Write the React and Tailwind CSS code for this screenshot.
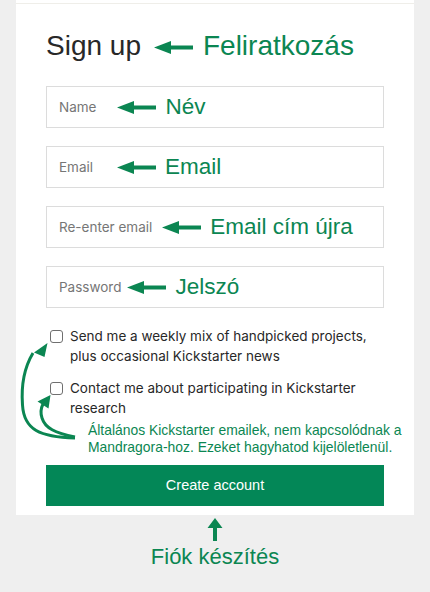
import React from 'react';

// Annotated Kickstarter sign-up form (Hungarian notes in green)
const GREEN = '#0b8652';

const LeftArrow = ({ className }) => (
  <svg width="39" height="13" viewBox="0 0 39 13" className={className}>
    <polygon points="0,6.5 17,0 17,4.5 39,4.5 39,8.5 17,8.5 17,13" fill={GREEN} />
  </svg>
);

const Field = ({ placeholder, note, gap }) => (
  <div className="h-[42px] border border-[#dcdcdc] flex items-center pl-[12px]">
    <span className="text-[13.5px] text-[#767676]" style={{ fontFamily: 'Inter, sans-serif' }}>
      {placeholder}
    </span>
    <LeftArrow className={gap} />
    <span className="ml-[9px] text-[22.5px] leading-none text-[#0b8652]" style={{ fontFamily: '"Liberation Sans", Arial, sans-serif' }}>
      {note}
    </span>
  </div>
);

const Check = ({ children }) => (
  <div className="flex items-start pl-[4px]">
    <span className="mt-[4px] w-[13px] h-[13px] shrink-0 rounded-[3px] border border-[#6f6f6f] bg-white" />
    <span className="ml-[7px] text-[13.5px] leading-[20px] text-[#282828] whitespace-nowrap" style={{ fontFamily: 'Inter, sans-serif' }}>
      {children}
    </span>
  </div>
);

export default function App() {
  return (
    <div className="min-h-[592px] bg-[#efefef] px-[16px]" style={{ fontFamily: '"Liberation Sans", Arial, sans-serif' }}>
      <div className="relative bg-white w-[398px]">
        <div className="pt-[3px]">
          <div className="h-px bg-[#efeee9]" />
        </div>
        <div className="px-[30px] pt-[28px] pb-[9px]">
          <div className="flex items-center h-[28px]">
            <span className="text-[28px] leading-[28px] text-[#282828]">Sign up</span>
            <LeftArrow className="ml-[13px] mt-[2px]" />
            <span className="ml-[10px] text-[28px] leading-[28px] text-[#0b8652]">Feliratkozás</span>
          </div>

          <div className="mt-[26px] flex flex-col gap-[18px]">
            <Field placeholder="Name" note="Név" gap="ml-[21px]" />
            <Field placeholder="Email" note="Email" gap="ml-[24px]" />
            <Field placeholder="Re-enter email" note="Email cím újra" gap="ml-[10px]" />
            <Field placeholder="Password" note="Jelszó" gap="ml-[6px]" />
          </div>

          <div className="mt-[18px] flex flex-col gap-[12px]">
            <Check>
              Send me a weekly mix of handpicked projects,
              <br />
              plus occasional Kickstarter news
            </Check>
            <Check>
              Contact me about participating in Kickstarter
              <br />
              research
            </Check>
          </div>

          <p className="mt-[4px] ml-[42px] -mr-[30px] text-[13.9px] leading-[17px] text-[#0b8652] whitespace-nowrap">
            Általános Kickstarter emailek, nem kapcsolódnak a
            <br />
            Mandragora-hoz. Ezeket hagyhatod kijelöletlenül.
          </p>

          <button className="mt-[9px] w-full h-[41px] bg-[#038757] text-white text-[14.5px]">
            Create account
          </button>
        </div>

        {/* curved pointer arrows to the checkboxes */}
        <svg
          className="absolute left-0 top-0 pointer-events-none"
          width="398"
          height="515"
          viewBox="16 0 398 515"
        >
          <path
            d="M75 438 C 40 437, 24 430, 22.5 405 C 21 385, 24 368, 33 353"
            fill="none"
            stroke={GREEN}
            strokeWidth="3"
          />
          <polygon points="47.5,343 34,352.5 44.5,357" fill={GREEN} />
          <path
            d="M75 437 C 55 433, 45 428, 42 418 C 40 412, 41 408, 43 404"
            fill="none"
            stroke={GREEN}
            strokeWidth="3"
          />
          <polygon points="50.5,395 37.5,401.5 48.5,408.5" fill={GREEN} />
        </svg>
      </div>

      <div className="flex flex-col items-center w-[398px] pt-[3px]">
        <svg width="16" height="24" viewBox="0 0 16 24">
          <polygon points="8,0 15.5,10 10,10 10,23 6,23 6,10 0.5,10" fill={GREEN} />
        </svg>
        <span className="mt-[3px] text-[22px] leading-[24px] text-[#0b8652]">Fiók készítés</span>
      </div>
    </div>
  );
}
